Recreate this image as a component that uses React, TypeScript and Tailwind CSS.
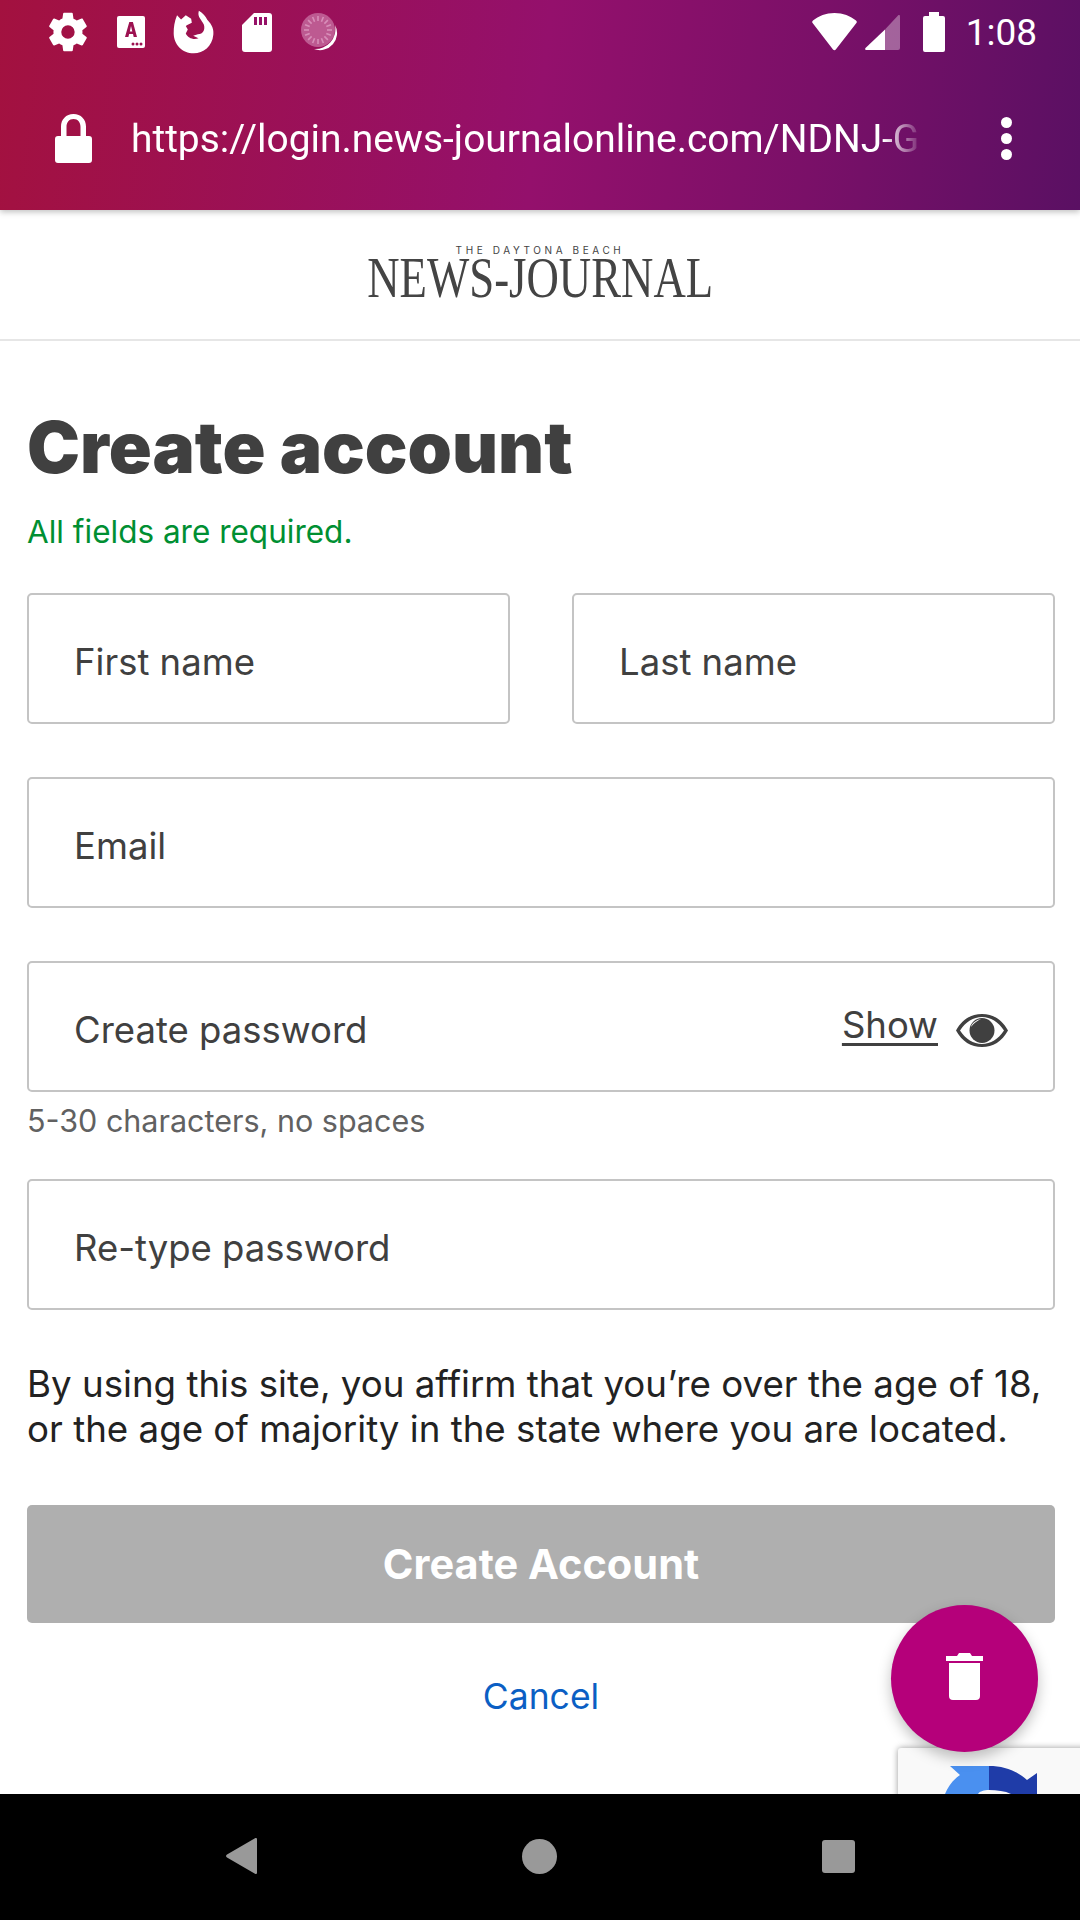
const bodyFont = "font-['Inter','Noto_Sans',sans-serif]";

function Gear() {
  return (
    <svg viewBox="1.5 1.5 20.4 21" className="w-[38px] h-[40px] fill-white">
      <path fillRule="evenodd" d="M19.4 13c.04-.33.06-.66.06-1s-.02-.67-.06-1l2.2-1.7c.2-.15.25-.43.12-.66l-2.08-3.6c-.13-.23-.4-.31-.64-.23l-2.6 1.04c-.54-.41-1.12-.76-1.76-1.02l-.39-2.76A.5.5 0 0 0 13.76 1.6H9.6a.5.5 0 0 0-.5.43l-.39 2.76c-.63.26-1.22.61-1.76 1.02L4.36 4.77c-.24-.09-.51 0-.64.23L1.64 8.6c-.13.23-.08.51.12.66L3.96 11c-.04.33-.07.67-.07 1s.03.67.07 1l-2.2 1.7c-.2.15-.25.43-.12.66l2.08 3.6c.13.23.4.31.64.23l2.59-1.04c.54.41 1.13.76 1.76 1.02l.39 2.76c.04.25.25.43.5.43h4.16c.25 0 .46-.18.5-.43l.39-2.76c.64-.26 1.22-.61 1.76-1.02l2.6 1.04c.24.09.51 0 .64-.23l2.08-3.6c.13-.23.08-.51-.12-.66L19.4 13ZM11.68 15.6a3.6 3.6 0 1 1 0-7.2 3.6 3.6 0 0 1 0 7.2Z" />
    </svg>
  );
}

function FontIcon() {
  return (
    <svg viewBox="0 0 28 32" className="w-[28px] h-[32px]">
      <rect width="28" height="32" rx="2" fill="#fff" />
      <path d="M8 21 12.3 6h3.6L20 21h-3.3l-.7-3h-3.9l-.7 3H8Zm4.8-5.6h2.5L14 10l-1.2 5.4Z" fill="#9c1150" />
      <circle cx="16" cy="28" r="1.5" fill="#9c1150" />
      <circle cx="20" cy="28" r="1.5" fill="#9c1150" />
      <circle cx="24" cy="28" r="1.5" fill="#9c1150" />
    </svg>
  );
}

function FirefoxIcon() {
  return (
    <svg viewBox="28 26 122 131" className="w-[41px] h-[44px]">
      <path fill="#fff" d="M105 28C118 35 125 45 130 55 145 70 150 85 148 100 145 135 118 155 90 155 55 155 30 128 30 95 30 78 32 62 40 42L52 54 66 42 82 52 84 64C78 68 72 68 66 74L72 84 66 96C72 110 90 116 104 110L88 103 102 98C118 98 124 85 120 70 114 55 99 47 105 28Z" />
    </svg>
  );
}

function SdIcon() {
  return (
    <svg viewBox="0 0 30 39" className="w-[30px] h-[39px]">
      <path fill="#fff" d="M12 0h15a3 3 0 0 1 3 3v33a3 3 0 0 1-3 3H3a3 3 0 0 1-3-3V12L12 0Z" />
      <rect x="12" y="4" width="3" height="8" fill="#961168" />
      <rect x="17" y="4" width="3" height="8" fill="#961168" />
      <rect x="22" y="4" width="3" height="8" fill="#961168" />
    </svg>
  );
}

function Spinner() {
  const ticks = Array.from({ length: 16 }, (_, i) => i * 22.5);
  return (
    <svg viewBox="0 0 38 38" className="w-[38px] h-[38px]">
      <circle cx="17" cy="17" r="17" fill="#bd5a91" />
      <path d="M34 12a17 17 0 0 1-21 24 20 20 0 0 0 21-24Z" fill="#fff" />
      {ticks.map((a) => (
        <rect key={a} x="16.200" y="3" width="1.600" height="5" fill="#d88fb9" transform={`rotate(${a} 17 17)`} />
      ))}
    </svg>
  );
}

function Lock() {
  return (
    <svg viewBox="0 0 37 49" className="w-[37px] h-[49px]">
      <path fill="#fff" fillRule="evenodd" d="M18.500 0C11 0 6 5.500 6 12.500V22H3a3 3 0 0 0-3 3v21a3 3 0 0 0 3 3h31a3 3 0 0 0 3-3V25a3 3 0 0 0-3-3h-3v-9.500C31 5.500 26 0 18.500 0Zm0 5C23 5 25.500 8.500 25.500 13v9h-14v-9C11.500 8.500 14 5 18.500 5Z" />
    </svg>
  );
}

function StatusRight() {
  return (
    <div className="flex items-center">
      <svg viewBox="0 0 45 38" className="w-[45px] h-[38px]">
        <path fill="#fff" d="M22.500 0C14 0 6.500 3 1 7.500c-1 .8-1 1.800-.4 2.500L21 36.500c.8 1 2 1 2.800 0L44.400 10c.6-.7.6-1.700-.4-2.500C38.500 3 31 0 22.500 0Z" />
      </svg>
      <svg viewBox="0 0 35 36" className="ml-[8px] w-[35px] h-[36px]">
        <path fill="#fff" d="M20 15.500V36H1.500C.3 36-.300 35 .5 34L20 15.500Z" />
        <path fill="#fff" fillOpacity=".35" d="M20 15.500 33 1.500c.8-.8 2-.4 2 1V34a2 2 0 0 1-2 2H20V15.500Z" />
      </svg>
      <svg viewBox="0 0 22 40" className="ml-[23px] w-[22px] h-[40px]">
        <path fill="#fff" d="M6 0h10v4h4a2 2 0 0 1 2 2v32a2 2 0 0 1-2 2H2a2 2 0 0 1-2-2V6a2 2 0 0 1 2-2h4V0Z" />
      </svg>
      <span className="ml-[21px] text-[37px] leading-none text-white font-['Roboto',sans-serif]">1:08</span>
    </div>
  );
}

function Field({ label, className = "" }: { label: string; className?: string }) {
  return (
    <div className={`h-[131px] rounded-[5px] border-[2px] border-[#c4c4c4] flex items-center pl-[45px] pt-[7px] text-[36.500px] text-[#404040] ${className}`}>
      {label}
    </div>
  );
}

export default function App() {
  return (
    <div className={`w-[1080px] h-[1920px] flex flex-col overflow-hidden bg-white ${bodyFont}`}>
      <header className="relative z-10 h-[210px] shrink-0 bg-[linear-gradient(97deg,#a3113f_0%,#94106c_50%,#7a1068_75%,#5a1063_100%)] shadow-[0_2px_6px_rgba(0,0,0,0.25)]">
        <div className="h-[64px] pl-[49px] pr-[43px] flex items-center justify-between">
          <div className="flex items-center">
            <Gear />
            <div className="ml-[30px]"><FontIcon /></div>
            <div className="ml-[28px]"><FirefoxIcon /></div>
            <div className="ml-[28px]"><SdIcon /></div>
            <div className="ml-[29px]"><Spinner /></div>
          </div>
          <StatusRight />
        </div>
        <div className="mt-[50px] pl-[55px] flex items-center">
          <Lock />
          <div className="ml-[39px] w-[792px] overflow-hidden whitespace-nowrap text-[38.900px] leading-[49px] text-white font-['Roboto',sans-serif] [mask-image:linear-gradient(to_right,black_95%,transparent)]">
            https://login.news-journalonline.com/NDNJ-G
          </div>
          <div className="ml-[78px] flex flex-col gap-[5px]">
            <span className="w-[11px] h-[11px] rounded-full bg-white" />
            <span className="w-[11px] h-[11px] rounded-full bg-white" />
            <span className="w-[11px] h-[11px] rounded-full bg-white" />
          </div>
        </div>
      </header>

      <main className="relative flex-1 overflow-hidden">
        <div className="h-[131px] border-b-[2px] border-[#e6e6e6] flex flex-col items-center pt-[35px] text-[#444]">
          <span className="text-[10px] leading-[11px] tracking-[0.36em]">THE DAYTONA BEACH</span>
          <span className="text-[56px] leading-[44px] scale-x-[0.8] font-['Liberation_Serif',serif] whitespace-nowrap">NEWS-JOURNAL</span>
        </div>

        <div className="pl-[27px] pr-[25px]">
          <h1 className="mt-[64px] text-[71px] leading-[84px] font-black text-[#404040]">Create account</h1>
          <p className="mt-[23px] text-[31.500px] leading-[40px] text-[#008f32]">All fields are required.</p>

          <div className="mt-[41px] flex gap-[62px]">
            <Field label="First name" className="flex-1" />
            <Field label="Last name" className="flex-1" />
          </div>
          <Field label="Email" className="mt-[53px]" />

          <div className="mt-[53px] relative">
            <Field label="Create password" />
            <div className="absolute right-[47px] top-0 h-[131px] flex items-center gap-[18px]">
              <span className="text-[36.500px] leading-[44px] text-[#404040] underline underline-offset-[5px] -mt-[3px]">Show</span>
              <svg viewBox="0 0 52 33" className="w-[52px] h-[33px] mt-[8px]">
                <path fill="#404040" fillRule="evenodd" d="M26 0C15 0 6 5.500 0 16.500 6 27.500 15 33 26 33s20-5.500 26-16.500C46 5.500 37 0 26 0Zm0 3C17.500 3 9.500 8 4 16.500 9.500 25 17.500 30 26 30s16.500-5 22-13.500C42.500 8 34.500 3 26 3Z" />
                <circle cx="26" cy="16.500" r="12.500" fill="#404040" />
                <path fill="#fff" d="M15 13c1-4 5-7 10-8-4 2-7 4-10 8Z" />
              </svg>
            </div>
          </div>
          <p className="mt-[12px] text-[30.500px] leading-[34px] text-[#616161]">5-30 characters, no spaces</p>

          <Field label="Re-type password" className="mt-[41px]" />

          <p className="mt-[51px] text-[36.700px] leading-[45px] text-[#222] whitespace-nowrap">
            By using this site, you affirm that you’re over the age of 18,
            <br />
            or the age of majority in the state where you are located.
          </p>

          <button className="mt-[54px] w-full h-[118px] rounded-[5px] bg-[#afafaf] text-white text-[41.500px] font-bold">
            Create Account
          </button>
          <p className="mt-[52px] text-center text-[35.500px] leading-[44px] text-[#0b5fc4]">Cancel</p>
        </div>

        <div className="absolute left-[898px] top-[1538px] w-[220px] h-[80px] rounded-[3px] bg-[#f9f9f9] shadow-[0_0_6px_rgba(0,0,0,0.4)]">
          <svg viewBox="0 0 92 28" className="absolute left-[47px] top-[18px] w-[92px] h-[28px]">
            <path fill="#4a90f0" d="M5 0H44V24C39 24 35 25 33 28H0C3 20 9 13 15 9L5 0Z" />
            <path fill="#1f3ca8" d="M44 0C60 0 72 5 82 14L92 7V28H66C60 25 52 24 44 24V0Z" />
          </svg>
        </div>

        <button className="absolute left-[891px] top-[1395px] w-[147px] h-[147px] rounded-full bg-[#b5007a] flex items-center justify-center shadow-[0_6px_14px_rgba(0,0,0,0.25)]">
          <svg viewBox="0 0 37 47" className="w-[37px] h-[47px] -mt-[5px]">
            <path fill="#fff" d="M0 3h11l2-3h11l2 3h11v5H0V3ZM3 10h31v33a4 4 0 0 1-4 4H7a4 4 0 0 1-4-4V10Z" />
          </svg>
        </button>
      </main>

      <nav className="relative z-10 h-[126px] shrink-0 bg-black flex items-center pl-[226px] pb-[2px]">
        <svg viewBox="0 0 31 36" className="w-[31px] h-[36px]">
          <path fill="#999" d="M29 .3c1-.6 2 0 2 1v33.400c0 1-1 1.600-2 1L1 19.500c-1.300-.8-1.300-2 0-2.900L29 .3Z" />
        </svg>
        <span className="ml-[265px] w-[35px] h-[35px] rounded-full bg-[#999]" />
        <span className="ml-[265px] w-[33px] h-[33px] rounded-[3px] bg-[#999]" />
      </nav>
    </div>
  );
}
